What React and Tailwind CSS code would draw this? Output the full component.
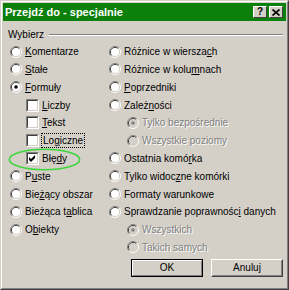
import React from "react";

function Radio({ checked, disabled }) {
  return (
    <svg width="12" height="12" viewBox="0 0 12 12" className="shrink-0">
      <path d="M2.11 9.89 A5.5 5.5 0 0 1 9.89 2.11" fill="none" stroke="#808080" />
      <path d="M9.89 2.11 A5.5 5.5 0 0 1 2.11 9.89" fill="none" stroke="#ffffff" />
      <path d="M2.82 9.18 A4.5 4.5 0 0 1 9.18 2.82" fill="none" stroke="#404040" />
      <path d="M9.18 2.82 A4.5 4.5 0 0 1 2.82 9.18" fill="none" stroke="#d4d0c8" />
      <circle cx="6" cy="6" r="4" fill={disabled ? "#d4d0c8" : "#ffffff"} />
      {checked && <circle cx="6" cy="6" r="1.8" fill={disabled ? "#808080" : "#000000"} />}
    </svg>
  );
}

function Check({ checked }) {
  return (
    <div className="w-[13px] h-[13px] shrink-0 border border-t-[#808080] border-l-[#808080] border-b-white border-r-white">
      <div className="w-full h-full border border-t-[#404040] border-l-[#404040] border-b-[#d4d0c8] border-r-[#d4d0c8] bg-white flex items-center justify-center">
        {checked && (
          <svg width="9" height="9" viewBox="0 0 9 9">
            <path d="M1 3 L3 5 L7 1 L7 4 L3 8 L1 6 Z" fill="#000" />
          </svg>
        )}
      </div>
    </div>
  );
}

function Row({ children, indent = "" }) {
  return <div className={"h-[17.8px] flex items-center gap-[3px] " + indent}>{children}</div>;
}

const dis = "text-[#808080] [text-shadow:1px_1px_0_#ffffff]";

export default function App() {
  return (
    <div className="w-[289px] h-[290px] bg-[#d4d0c8] border border-t-[#d4d0c8] border-l-[#d4d0c8] border-b-[#404040] border-r-[#404040] font-['Liberation_Sans',Arial,sans-serif] text-[10px] leading-[13px] text-black">
      <div className="h-full border border-t-white border-l-white border-b-[#808080] border-r-[#808080] p-px flex flex-col">
        {/* title bar */}
        <div className="h-[18px] bg-[#0b800b] flex items-center pl-[2px] pr-[3px]">
          <span className="text-white font-bold text-[11px] leading-[14px] flex-1">Przejdź do - specjalnie</span>
          <div className="flex gap-[2px]">
            <div className="w-[14px] h-[12px] bg-[#d4d0c8] border border-t-white border-l-white border-b-[#404040] border-r-[#404040] flex items-center justify-center">
              <span className="font-bold text-[10px] leading-[10px]">?</span>
            </div>
            <div className="w-[14px] h-[12px] bg-[#d4d0c8] border border-t-white border-l-white border-b-[#404040] border-r-[#404040] flex items-center justify-center">
              <svg width="8" height="7" viewBox="0 0 8 7">
                <path d="M0.5 0.5 L7.5 6.5 M7.5 0.5 L0.5 6.5" stroke="#000" strokeWidth="1.6" />
              </svg>
            </div>
          </div>
        </div>

        {/* group label */}
        <div className="mt-[7px] h-[13px] flex items-center pl-[5px] pr-[3px]">
          <span>Wybierz</span>
          <div className="flex-1 ml-[5px] h-[2px] border-t border-t-[#808080] border-b border-b-white" />
        </div>

        {/* options */}
        <div className="mt-[1.8px] flex pl-[7px]">
          <div className="w-[99px] flex flex-col">
            <Row><Radio /><span><span className="underline">K</span>omentarze</span></Row>
            <Row><Radio /><span><span className="underline">S</span>tałe</span></Row>
            <Row><Radio checked /><span><span className="underline">F</span>ormuły</span></Row>
            <Row indent="pl-[16px]"><Check /><span><span className="underline">L</span>iczby</span></Row>
            <Row indent="pl-[16px]"><Check /><span><span className="underline">T</span>ekst</span></Row>
            <Row indent="pl-[16px]"><Check /><span className="outline outline-1 outline-dotted outline-black px-px">Lo<span className="underline">g</span>iczne</span></Row>
            <div className="relative">
              <Row indent="pl-[16px]"><Check checked /><span>Błę<span className="underline">d</span>y</span></Row>
              <svg className="absolute left-[-2px] top-[-1.6px]" width="73" height="23" viewBox="0 0 73 23">
                <ellipse cx="36.5" cy="11.5" rx="35.2" ry="10.2" fill="none" stroke="#3ad63a" strokeWidth="1.6" />
              </svg>
            </div>
            <Row><Radio /><span>P<span className="underline">u</span>ste</span></Row>
            <Row><Radio /><span>Bie<span className="underline">ż</span>ący obszar</span></Row>
            <Row><Radio /><span>Bieżąca t<span className="underline">a</span>blica</span></Row>
            <Row><Radio /><span>O<span className="underline">b</span>iekty</span></Row>
          </div>
          <div className="flex flex-col">
            <Row><Radio /><span>Różnice w wiersza<span className="underline">c</span>h</span></Row>
            <Row><Radio /><span>Różnice w kolu<span className="underline">m</span>nach</span></Row>
            <Row><Radio /><span><span className="underline">P</span>oprzedniki</span></Row>
            <Row><Radio /><span>Zależ<span className="underline">n</span>ości</span></Row>
            <Row indent="pl-[18px]"><Radio checked disabled /><span className={dis}>Tylko bezpośrednie</span></Row>
            <Row indent="pl-[18px]"><Radio disabled /><span className={dis}>Wszystkie poziomy</span></Row>
            <Row><Radio /><span>Ostatnia komó<span className="underline">r</span>ka</span></Row>
            <Row><Radio /><span>Tylko widoc<span className="underline">z</span>ne komórki</span></Row>
            <Row><Radio /><span>Formaty warunkowe</span></Row>
            <Row><Radio /><span>Sprawdzanie poprawnośc<span className="underline">i</span> danych</span></Row>
            <Row indent="pl-[18px]"><Radio checked disabled /><span className={dis}>Wszystkich</span></Row>
            <Row indent="pl-[18px]"><Radio disabled /><span className={dis}>Takich samych</span></Row>
          </div>
        </div>

        {/* buttons */}
        <div className="mt-[2.6px] flex justify-end gap-[8px] pr-[3px]">
          <div className="w-[72px] h-[18px] border border-black">
            <div className="w-full h-full border border-t-white border-l-white border-b-[#808080] border-r-[#808080] flex items-center justify-center">
              OK
            </div>
          </div>
          <div className="w-[72px] h-[18px] border border-t-white border-l-white border-b-[#404040] border-r-[#404040]">
            <div className="w-full h-full border border-t-[#d4d0c8] border-l-[#d4d0c8] border-b-[#808080] border-r-[#808080] flex items-center justify-center">
              Anuluj
            </div>
          </div>
        </div>
      </div>
    </div>
  );
}
